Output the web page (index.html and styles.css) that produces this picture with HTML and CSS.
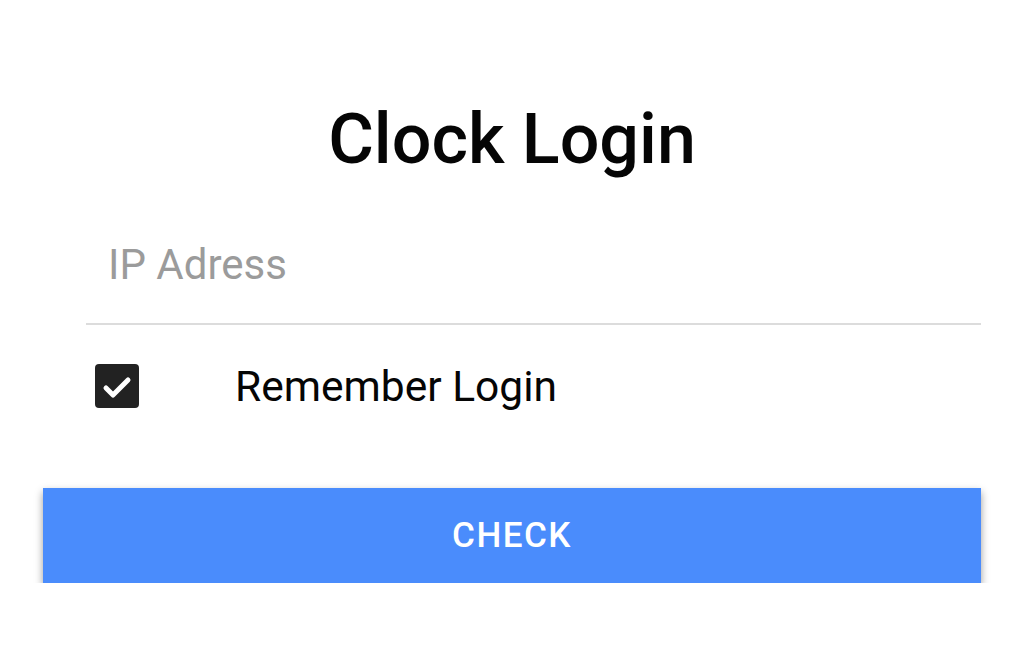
FILE: index.html
```html
<!DOCTYPE html>
<html lang="en">
<head>
    <meta charset="UTF-8">
    <meta name="viewport" content="width=device-width, initial-scale=1.0">
    <title>Clock Login</title>
    <link rel="stylesheet" href="styles.css">
</head>
<body>
    <div class="page">
        <h1>Clock Login</h1>

        <form class="login-form" onsubmit="return false;">
            <input class="ip-input" type="text" placeholder="IP Adress">

            <label class="remember">
                <input type="checkbox" checked>
                <span class="check-box">
                    <svg width="44" height="44" viewBox="0 0 44 44">
                        <path d="M11 24 L18 31 L33 16" fill="none" stroke="#fff" stroke-width="5" stroke-linecap="round" stroke-linejoin="round"/>
                    </svg>
                </span>
                <span class="remember-text">Remember Login</span>
            </label>

            <button class="check-button" type="submit">CHECK</button>
        </form>
    </div>
</body>
</html>
```

FILE: styles.css
```css
body {
    margin: 0;
    background-color: #fff;
    font-family: Roboto, "Noto Sans", sans-serif;
    color: #000;
}
.page {
    padding: 104px 43px 0;
}
h1 {
    margin: 0;
    text-align: center;
    font-size: 70px;
    font-weight: 500;
    line-height: 70px;
    color: #050505;
}
.login-form {
    display: flex;
    flex-direction: column;
}
.ip-input {
    margin: 32px 0 0 43px;
    height: 119px;
    box-sizing: border-box;
    padding: 0 0 0 22px;
    border: none;
    border-bottom: 2px solid #dcdcdc;
    font-family: Roboto, sans-serif;
    font-size: 42px;
    color: #222;
    outline: none;
    background: transparent;
}
.ip-input::placeholder {
    color: #9b9b9b;
}
.remember {
    display: flex;
    align-items: center;
    margin: 39px 0 0 52px;
    height: 44px;
    cursor: pointer;
}
.remember input {
    display: none;
}
.check-box {
    width: 44px;
    height: 44px;
    border-radius: 4px;
    background-color: #222;
    display: flex;
}
.remember-text {
    margin-left: 96px;
    font-size: 42.5px;
    color: #050505;
}
.check-button {
    margin-top: 80px;
    height: 95px;
    border: none;
    background-color: #4a8cfc;
    color: #fff;
    font-family: Roboto, sans-serif;
    font-size: 35px;
    font-weight: 500;
    letter-spacing: 1.5px;
    box-shadow: 0 4px 8px rgba(0, 0, 0, 0.4);
    cursor: pointer;
}
```
